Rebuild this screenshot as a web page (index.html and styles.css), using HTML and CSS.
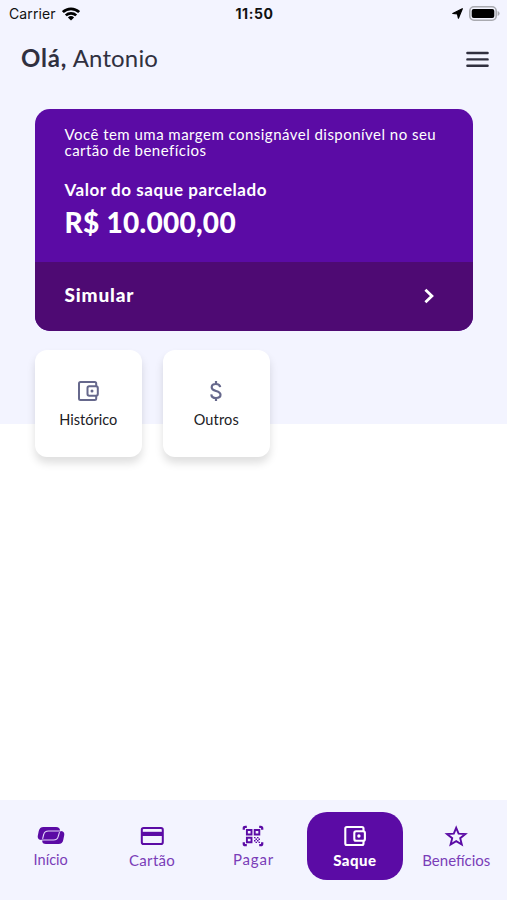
FILE: index.html
```html
<!DOCTYPE html>
<html lang="pt-BR">
<head>
<meta charset="utf-8">
<meta name="viewport" content="width=device-width, initial-scale=1">
<title>Saque</title>
<link rel="stylesheet" href="styles.css">
</head>
<body>
<div class="app">
  <div class="status">
    <div class="status-left">
      <span class="carrier">Carrier</span>
      <svg class="wifi" width="18" height="14" viewBox="0 0 18 14" fill="none" stroke="#000" stroke-width="2.7"><path d="M.9 5.1a11.7 11.7 0 0 1 16.2 0"/><path d="M3.8 8.4a7.5 7.5 0 0 1 10.4 0"/><path d="M9 13.6 5.9 10.5a4.5 4.5 0 0 1 6.2 0z" fill="#000" stroke="none"/></svg>
    </div>
    <span class="time">11:50</span>
    <div class="status-right">
      <svg width="11" height="11" viewBox="0 0 11 11"><path d="M10.3.7 6.4 10.2 5.5 6 .8 5.5z" fill="#000" stroke="#000" stroke-width="1.2" stroke-linejoin="round"/></svg>
      <svg width="31" height="15" viewBox="0 0 31 15"><rect x=".8" y=".8" width="26.4" height="13.4" rx="4.2" fill="#f3f4ff" stroke="#a9aab0" stroke-width="1.6"/><rect x="2.7" y="2.9" width="22.6" height="9.2" rx="2" fill="#000"/><path d="M28.6 5v5q2-.8 2-2.5T28.6 5z" fill="#a9aab0"/></svg>
    </div>
  </div>

  <header class="header">
    <h1 class="hello"><b>Olá,</b> <span>Antonio</span></h1>
    <svg class="menu" width="23" height="17" viewBox="0 0 23 17" stroke="#30303f" stroke-width="2.4" stroke-linecap="round"><path d="M1.4 2h20.2M1.4 8.4h20.2M1.4 14.8h20.2"/></svg>
  </header>

  <main class="main">
    <section class="card">
      <div class="card-body">
        <p class="note">Você tem uma margem consignável disponível no seu<br>cartão de benefícios</p>
        <p class="label">Valor do saque parcelado</p>
        <p class="amount">R$ 10.000,00</p>
      </div>
      <a class="card-action">
        <span>Simular</span>
        <svg width="11" height="16" viewBox="0 0 11 16" fill="none" stroke="#fff" stroke-width="2.8"><path d="m1.4 1.8 6.5 6.2-6.5 6.2"/></svg>
      </a>
    </section>

    <div class="tiles">
      <a class="tile">
        <svg width="22" height="20" viewBox="0 0 22 20" fill="none" stroke="#66688c" stroke-width="2"><path d="M19.2 5.2V2.5Q19.2 1 17.7 1H3.500Q2 1 2 2.500v15Q2 19 3.500 19h14.200q1.5 0 1.5-1.5v-2.7"/><rect x="10.5" y="5.2" width="10.3" height="9.6" rx="1.8"/><circle cx="15" cy="10" r="1.5" fill="#66688c" stroke="none"/></svg>
        <span class="historico">Histórico</span>
      </a>
      <a class="tile">
        <svg width="22" height="20" viewBox="0 0 22 20" fill="none" stroke="#66688c" stroke-width="2.2"><path d="M15.2 6.200c-.3-2-1.800-3.200-4.300-3.200-2.600 0-4.200 1.300-4.200 3.300 0 2.200 1.700 3 4.300 3.700 2.700.7 4.500 1.600 4.500 3.800 0 2-1.700 3.200-4.500 3.200-2.700 0-4.500-1.300-4.700-3.700M11 0v3M11 17v3"/></svg>
        <span class="outros">Outros</span>
      </a>
    </div>
  </main>

  <nav class="nav">
    <a class="tab">
      <svg width="28" height="24" viewBox="0 0 28 24"><path d="M6.500 3H19q4 0 4 3.500l-1.800 6Q20.500 16 16.500 16H4.500Q.5 16 .7 12.300l1-5Q2.500 3 6.500 3z" fill="#5b0ba5"/><path d="M11.500 7H23.500q4 0 3.800 3.700l-1 5Q25.500 20 21.500 20H9Q5 20 5.200 16.500l1.500-6Q7.500 7 11.500 7z" fill="#5b0ba5"/><path d="M23.800 7H11.500Q7.500 7 6.700 10.500L5.600 14.800M4.500 16h12q4 0 4.700-3.500L22.500 8.200" fill="none" stroke="#e4d8fa" stroke-width="1.1"/></svg>
      <span class="inicio">Início</span>
    </a>
    <a class="tab">
      <svg width="24" height="24" viewBox="0 0 24 24"><rect x="1.8" y="4" width="21" height="16" rx="1.8" fill="none" stroke="#5b0ba5" stroke-width="2"/><path d="M2 7.8h20.500v4.200H2z" fill="#5b0ba5"/></svg>
      <span class="cartao">Cartão</span>
    </a>
    <a class="tab">
      <svg class="qr" width="22" height="24" viewBox="0 0 22 24" fill="none" stroke="#5b0ba5" stroke-width="1.9"><path d="M1.800 5.800V4.300q0-1.500 1.500-1.500h1.500M17.200 2.800h1.500q1.500 0 1.500 1.500v1.500M1.800 18.200v1.500q0 1.500 1.500 1.500h1.500M20.200 18.200v1.500q0 1.500-1.500 1.500h-1.500" stroke-width="2.3"/><path d="M4.900 6h4.600v4.500H4.900zM12.700 6h4.600v4.500h-4.600zM4.900 13.700h4.600v4.500H4.900z"/><path d="M12 13.600h1.500m1.500 0h1.500m-3 1.600h1.500m1.500 0h1.500M12 16.800h1.500m1.500 0h1.500m-3 1.600h1.500m1.500 0h1.500" stroke-width="1.4"/></svg>
      <span class="pagar">Pagar</span>
    </a>
    <a class="tab tab-active">
      <svg width="22" height="24" viewBox="0 0 22 24" fill="none" stroke="#fff" stroke-width="2.1"><path d="M19.500 7.200V4.500Q19.500 3 18 3H2.800Q1.300 3 1.300 4.500v15Q1.300 21 2.800 21H18q1.500 0 1.500-1.500v-2.700"/><rect x="10.300" y="7.200" width="10.600" height="9.600" rx="1.8"/><circle cx="14.900" cy="12" r="1.700" fill="#fff" stroke="none"/></svg>
      <span class="saque">Saque</span>
    </a>
    <a class="tab">
      <svg width="24" height="24" viewBox="0 0 24 24" fill="none" stroke="#5b0ba5" stroke-width="1.9"><path d="m12.200 3.800 2.400 5.800 6.800.5-5.200 4.100 1.600 6.400-5.600-3.400-5.600 3.400 1.600-6.400L3 10.100l6.800-.5z"/></svg>
      <span class="beneficios">Benefícios</span>
    </a>
  </nav>
</div>
</body>
</html>
```
FILE: styles.css
```css
* { box-sizing: border-box; }
body { margin: 0; background: #fff; font-family: Lato, sans-serif; color: #30303f; }
h1, p { margin: 0; font-weight: 400; }
svg { display: block; flex: none; }
span, b, p { white-space: nowrap; }

.app { height: 900px; display: flex; flex-direction: column; background: linear-gradient(#f3f4ff 424px, #fff 424px); }

.status { height: 27px; padding: 0 7px 0 9px; display: grid; grid-template-columns: 1fr auto 1fr; align-items: center; font-family: Inter, sans-serif; font-size: 14px; color: #111; }
.status-left { display: flex; align-items: center; gap: 6px; }
.carrier { letter-spacing: .1px; }
.time { font-weight: 700; letter-spacing: .6px; }
.status-right { display: flex; align-items: center; justify-content: flex-end; gap: 6px; }

.header { height: 64px; padding: 0 18px 0 21px; display: flex; align-items: center; justify-content: space-between; }
.hello { padding-bottom: 3px; font-size: 24px; line-height: 30px; color: #30303f; letter-spacing: .15px; }
.hello b { font-weight: 700; letter-spacing: .8px; }

.main { flex: 1; padding: 17.5px 34.5px 0 35px; }
.card { height: 222px; border-radius: 15px; overflow: hidden; color: #fff; background: #5b0ba5; display: flex; flex-direction: column; }
.card-body { flex: 1; padding: 17px 29.5px 0; }
.note { font-size: 15px; line-height: 16px; letter-spacing: .47px; }
.label { margin-top: 21px; font-size: 17px; line-height: 22px; font-weight: 700; letter-spacing: .56px; }
.amount { margin-top: 3px; font-size: 28px; line-height: 36px; font-weight: 900; letter-spacing: .28px; }
.card-action { height: 68.5px; padding: 0 38px 0 29.5px; display: flex; align-items: center; justify-content: space-between; background: #4e0a73; font-size: 19px; font-weight: 900; letter-spacing: .85px; }
.card-action span { padding-bottom: 3px; }

.tiles { margin-top: 19.5px; display: flex; gap: 21.5px; }
.tile { width: 106.5px; height: 107px; padding-top: 31px; display: flex; flex-direction: column; align-items: center; gap: 9px; border-radius: 12px; background: #fff; box-shadow: 0 6px 9px rgba(0, 0, 0, .13); font-size: 14.5px; line-height: 20px; color: #202024; }
.outros { letter-spacing: .15px; }

.nav { height: 100px; padding-top: 12px; display: grid; grid-template-columns: repeat(5, 1fr); justify-items: center; background: #f3f4ff; }
.tab { width: 96.5px; height: 67.5px; padding-top: 12px; display: flex; flex-direction: column; align-items: center; gap: 2px; font-size: 15px; line-height: 20px; color: #7a3db8; }
.inicio { font-size: 14.5px; }
.cartao { letter-spacing: .3px; }
.pagar { letter-spacing: .8px; margin-top: -1px; }
.saque { letter-spacing: .5px; }
.tab-active { border-radius: 20px; background: #5b0ba5; color: #fff; font-weight: 900; }
```
